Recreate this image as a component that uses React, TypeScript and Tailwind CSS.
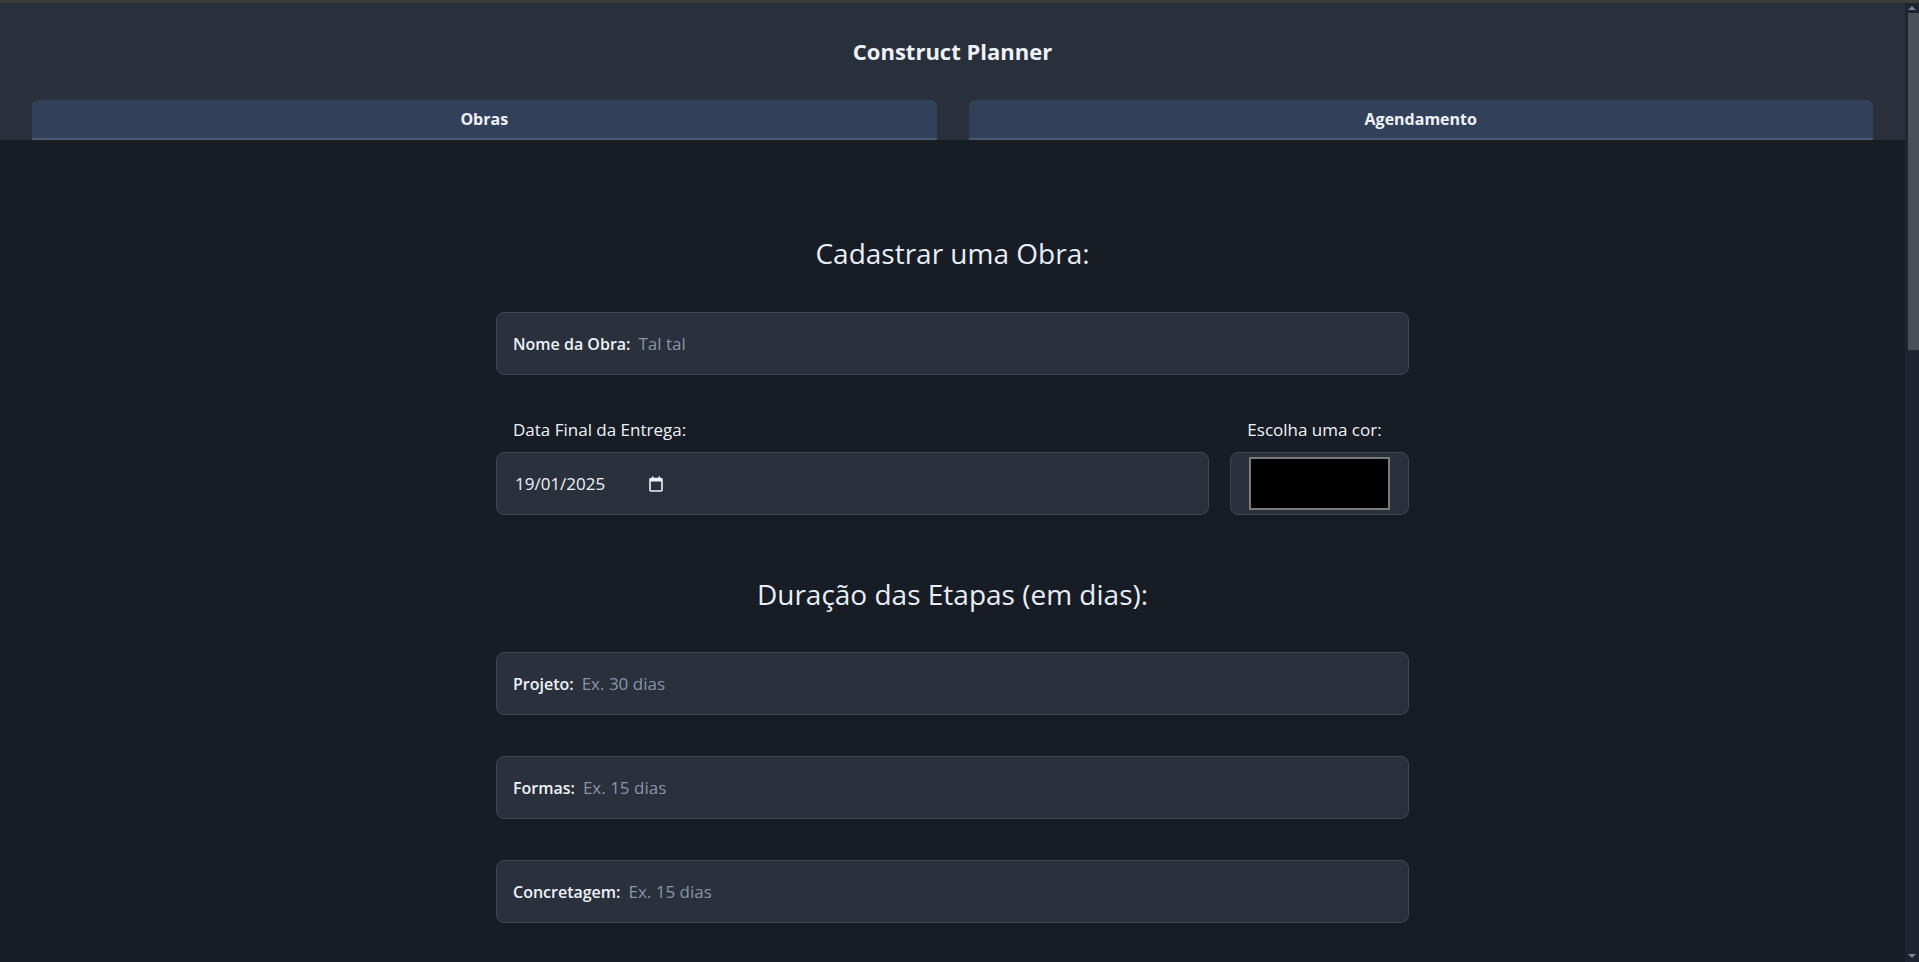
import React from "react";

function Field({ label, placeholder }: { label: string; placeholder: string }) {
  return (
    <div className="flex h-[63px] items-center rounded-[8px] border border-[#3e4553] bg-[#2a303c] pl-4">
      <span className="text-[16px] font-semibold text-[#eef2f8]">{label}</span>
      <span className="ml-[8px] text-[17px] text-[#8a94a6]">{placeholder}</span>
    </div>
  );
}

function CalendarIcon() {
  return (
    <svg width="14" height="16" viewBox="0 0 14 16" className="block">
      <rect x="1" y="2.5" width="12" height="12.5" rx="1" fill="none" stroke="#eef2f8" strokeWidth="1.6" />
      <rect x="1" y="2.5" width="12" height="3" fill="#eef2f8" />
      <rect x="3" y="0.5" width="1.6" height="3" fill="#eef2f8" />
      <rect x="9.4" y="0.5" width="1.6" height="3" fill="#eef2f8" />
    </svg>
  );
}

export default function App() {
  return (
    <div className="flex h-screen w-full flex-col overflow-hidden bg-[#181c24] font-['Open_Sans','Noto_Sans',sans-serif] text-[#eef2f8]">
      <div className="h-[3px] shrink-0 bg-[#3d3d3d]" />
      <div className="flex min-h-0 flex-1">
        <div className="flex min-w-0 flex-1 flex-col">
          <header className="bg-[#2a303b] pt-[34px]">
            <h1 className="text-center text-[22px] font-bold leading-[28px] text-[#eef2f8]">
              Construct Planner
            </h1>
            <nav className="mt-[35px] flex gap-[32px] px-[32px]">
              <button className="h-[40px] flex-1 rounded-t-[6px] border-b-2 border-[#4d5872] bg-[#334059] text-[16px] font-bold text-[#eef2f8]">
                Obras
              </button>
              <button className="h-[40px] flex-1 rounded-t-[6px] border-b-2 border-[#4d5872] bg-[#334059] text-[16px] font-bold text-[#eef2f8]">
                Agendamento
              </button>
            </nav>
          </header>
          <main className="flex justify-center pt-[95px]">
            <div className="flex w-[913px] flex-col">
              <h2 className="text-center text-[28px] font-normal leading-[36px] text-[#e8eef7]">
                Cadastrar uma Obra:
              </h2>
              <div className="mt-[41px]">
                <Field label="Nome da Obra:" placeholder="Tal tal" />
              </div>
              <div className="mt-[43px] flex gap-[21px]">
                <div className="flex flex-1 flex-col">
                  <label className="pl-[17px] text-[17px] font-medium leading-[24px] text-[#eef2f8]">
                    Data Final da Entrega:
                  </label>
                  <div className="mt-[10px] flex h-[63px] items-center rounded-[8px] border border-[#3e4553] bg-[#2a303c] pl-[18px]">
                    <span className="w-[134px] text-[17px] text-[#eef2f8]">19/01/2025</span>
                    <CalendarIcon />
                  </div>
                </div>
                <div className="flex w-[179px] flex-col">
                  <label className="pr-[10px] text-center text-[17px] font-medium leading-[24px] text-[#eef2f8]">
                    Escolha uma cor:
                  </label>
                  <div className="mt-[10px] flex h-[63px] items-center justify-center rounded-[8px] border border-[#3e4553] bg-[#2a303c]">
                    <div className="h-[53px] w-[141px] border-2 border-[#7a7a7a] bg-black" />
                  </div>
                </div>
              </div>
              <h2 className="mt-[61px] text-center text-[28px] font-normal leading-[36px] text-[#e8eef7]">
                Duração das Etapas (em dias):
              </h2>
              <div className="mt-[40px] flex flex-col gap-[41px]">
                <Field label="Projeto:" placeholder="Ex. 30 dias" />
                <Field label="Formas:" placeholder="Ex. 15 dias" />
                <Field label="Concretagem:" placeholder="Ex. 15 dias" />
              </div>
            </div>
          </main>
        </div>
        <div className="flex w-[14px] shrink-0 flex-col items-center bg-[#1f2530]">
          <div className="mt-[3px] h-0 w-0 border-x-[4px] border-b-[4px] border-x-transparent border-b-[#7d8594]" />
          <div className="ml-[2px] mt-[3px] h-[337px] w-[11px] bg-[#4a5059]" />
          <div className="flex-1" />
          <div className="mb-[4px] h-0 w-0 border-x-[4px] border-t-[4px] border-x-transparent border-t-[#7d8594]" />
        </div>
      </div>
    </div>
  );
}
